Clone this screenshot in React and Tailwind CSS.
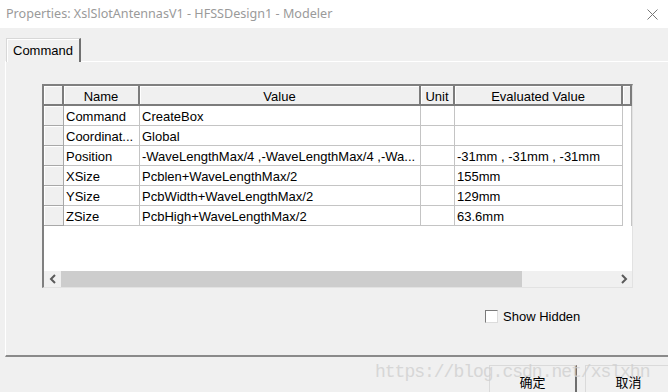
import React from 'react';

const rows = [
  { name: 'Command', value: 'CreateBox', unit: '', evaluated: '' },
  { name: 'Coordinat...', value: 'Global', unit: '', evaluated: '' },
  { name: 'Position', value: '-WaveLengthMax/4 ,-WaveLengthMax/4 ,-Wa...', unit: '', evaluated: '-31mm , -31mm , -31mm' },
  { name: 'XSize', value: 'Pcblen+WaveLengthMax/2', unit: '', evaluated: '155mm' },
  { name: 'YSize', value: 'PcbWidth+WaveLengthMax/2', unit: '', evaluated: '129mm' },
  { name: 'ZSize', value: 'PcbHigh+WaveLengthMax/2', unit: '', evaluated: '63.6mm' },
];

// header cell: raised look
const HeadCell = ({ w, children }) => (
  <div className={`${w} h-[20px] shrink-0 bg-[#f0f0f0] border-r-2 border-b-2 border-[#7c7c7c] shadow-[inset_1px_1px_0_#ffffff] flex items-center justify-center pt-[2px] text-[13px] text-black leading-none`}>
    {children}
  </div>
);

const Cell = ({ w, children }) => (
  <div className={`${w} h-[20px] shrink-0 border-r border-b border-[#c4c4c4] flex items-center pl-[2px] pt-[2px] text-[13px] text-black leading-none whitespace-nowrap overflow-hidden`}>
    {children}
  </div>
);

const Chevron = ({ dir }) => (
  <svg width="8" height="10" viewBox="0 0 8 10">
    {dir === 'left' ? (
      <path d="M6 1 L2 5 L6 9" stroke="#5a5a5a" strokeWidth="2" fill="none" />
    ) : (
      <path d="M2 1 L6 5 L2 9" stroke="#5a5a5a" strokeWidth="2" fill="none" />
    )}
  </svg>
);

const App = () => {
  return (
    <div className="w-[668px] h-[392px] overflow-hidden bg-[#f0f0f0] relative font-['Liberation_Sans',Arial,sans-serif]">
      {/* title bar */}
      <div className="h-[28px] bg-white flex items-center justify-between pl-[6px] pr-[10px]">
        <span className="text-[12.6px] text-[#9a9a9a] font-['Noto_Sans',sans-serif] leading-none">
          Properties: XslSlotAntennasV1 - HFSSDesign1 - Modeler
        </span>
        <svg width="11" height="11" viewBox="0 0 11 11">
          <path d="M0.5 0.5 L10.5 10.5 M10.5 0.5 L0.5 10.5" stroke="#777" strokeWidth="1" />
        </svg>
      </div>

      {/* tabs */}
      <div className="h-[33px] pt-[10px] pl-[6px] flex items-end">
        <div className="relative z-10 w-[75px] h-[24px] -mb-[1px] bg-[#f0f0f0] border-t border-l border-[#d8d8d8] border-r-2 border-r-[#707070] shadow-[inset_1px_1px_0_#ffffff] pl-[6px] pt-[1px] flex items-center text-[13px] text-black">
          Command
        </div>
      </div>

      {/* panel */}
      <div className="ml-[5px] h-[296px] border-l border-t border-[#ffffff] border-b-2 border-b-[#8a8a8a] pt-[22px] pl-[36px]">
        <div className="w-[591px] h-[204px] border-l-2 border-t-2 border-[#808080] border-r border-b border-r-[#e2e2e2] border-b-[#e2e2e2] bg-white flex flex-col">
          <div className="flex">
            <HeadCell w="w-[20px]" />
            <HeadCell w="w-[76px]">Name</HeadCell>
            <HeadCell w="w-[281px]">Value</HeadCell>
            <HeadCell w="w-[34px]">Unit</HeadCell>
            <HeadCell w="w-[168px]">Evaluated Value</HeadCell>
            <HeadCell w="w-[9px]" />
          </div>
          {rows.map((r) => (
            <div key={r.name} className="flex">
              <div className="w-[20px] h-[20px] shrink-0 bg-[#f0f0f0] border-r border-b border-[#a8a8a8] shadow-[inset_1px_1px_0_#ffffff]" />
              <Cell w="w-[76px]">{r.name}</Cell>
              <Cell w="w-[281px]">{r.value}</Cell>
              <Cell w="w-[34px]">{r.unit}</Cell>
              <Cell w="w-[168px]">{r.evaluated}</Cell>
              <div className="w-[9px] h-[20px] shrink-0 border-r border-[#c4c4c4]" />
            </div>
          ))}
          <div className="flex-1" />
          {/* horizontal scrollbar */}
          <div className="h-[16px] bg-[#f0f0f0] flex items-center">
            <div className="w-[17px] h-full flex items-center justify-center">
              <Chevron dir="left" />
            </div>
            <div className="w-[461px] h-full bg-[#cdcdcd]" />
            <div className="flex-1" />
            <div className="w-[17px] h-full flex items-center justify-center">
              <Chevron dir="right" />
            </div>
          </div>
        </div>

        {/* show hidden */}
        <div className="mt-[22px] ml-[443px] flex items-center gap-[5px]">
          <div className="w-[13px] h-[13px] bg-white border border-[#7a7a7a] border-r-[#dcdcdc] border-b-[#dcdcdc]" />
          <span className="text-[13px] text-black leading-none">Show Hidden</span>
        </div>
      </div>

      {/* buttons */}
      <div className="pt-[8px] flex font-['Noto_Sans_CJK_SC',sans-serif] text-[13px] text-black">
        <div className="ml-[489px] w-[88px] h-[36px] shrink-0 border-l border-t border-[#dadada] border-r-2 border-r-[#6e6e6e] flex justify-center pt-[6px]">
          确定
        </div>
        <div className="ml-[8px] w-[88px] h-[36px] shrink-0 border-l border-t border-[#dadada] border-r-2 border-r-[#6e6e6e] flex justify-center pt-[6px]">
          取消
        </div>
      </div>

      {/* watermark */}
      <div className="absolute left-[375px] top-[363px] z-20 text-[18px] tracking-[-1px] leading-none text-[#d0d0d0] opacity-80 font-['Liberation_Mono',monospace] whitespace-nowrap pointer-events-none">
        https://blog.csdn.net/xslxhn
      </div>
    </div>
  );
};

export default App;
